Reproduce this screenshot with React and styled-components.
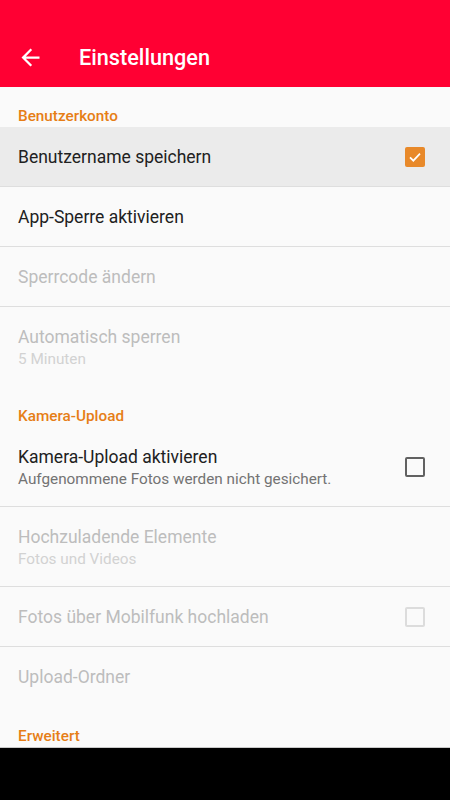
import React from 'react';
import styled, {createGlobalStyle} from 'styled-components';

const GlobalStyle = createGlobalStyle`
    html, body {
        margin: 0;
        padding: 0;
        background: #fafafa;
    }
    * {
        box-sizing: border-box;
    }
`;

const Screen = styled.div`
    width: 450px;
    height: 800px;
    display: flex;
    flex-direction: column;
    font-family: Roboto, 'Noto Sans', sans-serif;
    background: #fafafa;
    overflow: hidden;
`;

const AppBar = styled.header`
    height: 87px;
    flex-shrink: 0;
    background: #ff0033;
    padding-top: 27px;
`;

const Toolbar = styled.div`
    height: 60px;
    display: flex;
    align-items: center;
`;

const BackButton = styled.div`
    width: 79px;
    height: 60px;
    display: flex;
    align-items: center;
    padding-left: 17px;
`;

const Title = styled.h1`
    margin: 0;
    font-size: 21.7px;
    font-weight: 500;
    color: #ffffff;
`;

const List = styled.div`
    flex: 1;
    overflow: hidden;
    display: flex;
    flex-direction: column;
`;

const Category = styled.div`
    height: 40px;
    flex-shrink: 0;
    padding: 19px 18px 0;
    font-size: 15.3px;
    font-weight: 500;
    line-height: 20px;
    color: #e67e16;
`;

const Row = styled.div`
    height: ${(p) => (p.$tall ? 80 : 60)}px;
    flex-shrink: 0;
    display: flex;
    align-items: center;
    padding: 0 25px 0 18px;
    background: ${(p) => (p.$pressed ? '#ebebeb' : 'transparent')};
    border-bottom: 1px solid ${(p) => (p.$divider ? '#dedede' : 'transparent')};
`;

const Texts = styled.div`
    flex: 1;
    display: flex;
    flex-direction: column;
    padding-top: 2px;
`;

const RowTitle = styled.div`
    font-size: 17.5px;
    line-height: 23px;
    color: ${(p) => (p.$disabled ? '#bdbdbd' : '#212121')};
`;

const RowSummary = styled.div`
    font-size: 15.3px;
    line-height: 21px;
    color: ${(p) => (p.$disabled ? '#d2d2d2' : '#737373')};
`;

const Box = styled.div`
    width: 20px;
    height: 20px;
    border-radius: 2px;
    display: flex;
    align-items: center;
    justify-content: center;
    background: ${(p) => (p.$checked ? '#e8892a' : 'transparent')};
    border: ${(p) => (p.$checked ? 'none' : `2px solid ${p.$disabled ? '#dcdcdc' : '#616161'}`)};
`;

const NavBar = styled.div`
    height: 53px;
    flex-shrink: 0;
    background: #000000;
    border-top: 1px solid #c8c8c8;
`;

const BackArrow = () => (
    <svg width="27" height="27" viewBox="0 0 24 24">
        <path fill="#ffffff" d="M20 11H7.83l5.59-5.59L12 4l-8 8 8 8 1.41-1.41L7.83 13H20v-2z"/>
    </svg>
);

const Checkbox = ({checked, disabled}) => (
    <Box
        $checked={checked}
        $disabled={disabled}
    >
        {checked && (
            <svg width="16" height="16" viewBox="0 0 24 24">
                <path
                    d="M4.5 12.5l5 5 10-10.5"
                    fill="none"
                    stroke="#ffffff"
                    strokeWidth="2.6"
                />
            </svg>
        )}
    </Box>
);

const Pref = ({title, summary, disabled, divider, pressed, checkbox, checked}) => (
    <Row
        $tall={Boolean(summary)}
        $divider={divider}
        $pressed={pressed}
    >
        <Texts>
            <RowTitle $disabled={disabled}>{title}</RowTitle>
            {summary && <RowSummary $disabled={disabled}>{summary}</RowSummary>}
        </Texts>
        {checkbox && (
            <Checkbox
                checked={checked}
                disabled={disabled}
            />
        )}
    </Row>
);

export default function App() {
    return (
        <Screen>
            <GlobalStyle/>
            <AppBar>
                <Toolbar>
                    <BackButton>
                        <BackArrow/>
                    </BackButton>
                    <Title>{'Einstellungen'}</Title>
                </Toolbar>
            </AppBar>
            <List>
                <Category>{'Benutzerkonto'}</Category>
                <Pref
                    title="Benutzername speichern"
                    divider={true}
                    pressed={true}
                    checkbox={true}
                    checked={true}
                />
                <Pref
                    title="App-Sperre aktivieren"
                    divider={true}
                />
                <Pref
                    title="Sperrcode ändern"
                    divider={true}
                    disabled={true}
                />
                <Pref
                    title="Automatisch sperren"
                    summary="5 Minuten"
                    disabled={true}
                />
                <Category>{'Kamera-Upload'}</Category>
                <Pref
                    title="Kamera-Upload aktivieren"
                    summary="Aufgenommene Fotos werden nicht gesichert."
                    divider={true}
                    checkbox={true}
                />
                <Pref
                    title="Hochzuladende Elemente"
                    summary="Fotos und Videos"
                    divider={true}
                    disabled={true}
                />
                <Pref
                    title="Fotos über Mobilfunk hochladen"
                    divider={true}
                    disabled={true}
                    checkbox={true}
                />
                <Pref
                    title="Upload-Ordner"
                    disabled={true}
                />
                <Category>{'Erweitert'}</Category>
            </List>
            <NavBar/>
        </Screen>
    );
}
